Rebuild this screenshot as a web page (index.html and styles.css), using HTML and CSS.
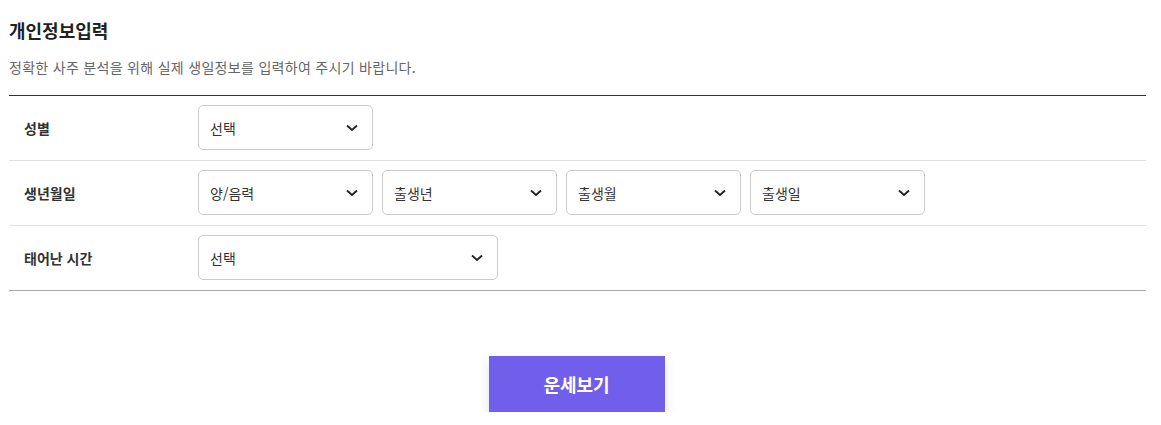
FILE: index.html
```html
<!DOCTYPE html>
<html lang="ko">
<head>
<meta charset="utf-8">
<title>개인정보입력</title>
<link rel="stylesheet" href="styles.css">
</head>
<body>
<div class="page">
  <h2 class="title">개인정보입력</h2>
  <p class="desc">정확한 사주 분석을 위해 실제 생일정보를 입력하여 주시기 바랍니다.</p>
  <div class="form">
    <div class="row">
      <div class="label">성별</div>
      <div class="fields">
        <div class="select"><span>선택</span><svg class="chev" width="12" height="8" viewBox="0 0 12 8"><path d="M1 1.5 L6 6 L11 1.5" fill="none" stroke="#222" stroke-width="1.8"/></svg></div>
      </div>
    </div>
    <div class="row">
      <div class="label">생년월일</div>
      <div class="fields">
        <div class="select"><span>양/음력</span><svg class="chev" width="12" height="8" viewBox="0 0 12 8"><path d="M1 1.5 L6 6 L11 1.5" fill="none" stroke="#222" stroke-width="1.8"/></svg></div>
        <div class="select"><span>출생년</span><svg class="chev" width="12" height="8" viewBox="0 0 12 8"><path d="M1 1.5 L6 6 L11 1.5" fill="none" stroke="#222" stroke-width="1.8"/></svg></div>
        <div class="select"><span>출생월</span><svg class="chev" width="12" height="8" viewBox="0 0 12 8"><path d="M1 1.5 L6 6 L11 1.5" fill="none" stroke="#222" stroke-width="1.8"/></svg></div>
        <div class="select"><span>출생일</span><svg class="chev" width="12" height="8" viewBox="0 0 12 8"><path d="M1 1.5 L6 6 L11 1.5" fill="none" stroke="#222" stroke-width="1.8"/></svg></div>
      </div>
    </div>
    <div class="row">
      <div class="label">태어난 시간</div>
      <div class="fields">
        <div class="select wide"><span>선택</span><svg class="chev" width="12" height="8" viewBox="0 0 12 8"><path d="M1 1.5 L6 6 L11 1.5" fill="none" stroke="#222" stroke-width="1.8"/></svg></div>
      </div>
    </div>
  </div>
  <div class="actions">
    <button class="btn">운세보기</button>
  </div>
</div>
</body>
</html>
```
FILE: styles.css
```css
* { box-sizing: border-box; }
html, body { margin: 0; padding: 0; background: #fff; }
body {
  font-family: "Noto Sans CJK KR", "Noto Sans", sans-serif;
  color: #333;
}
.page {
  width: 1137px;
  margin-left: 9px;
  padding-top: 17px;
}
.title {
  margin: 0;
  font-size: 18px;
  line-height: 26px;
  font-weight: 700;
  color: #222;
}
.desc {
  margin: 14px 0 0;
  font-size: 14px;
  line-height: 20px;
  letter-spacing: 0.3px;
  color: #666;
}
.form {
  margin-top: 18px;
  border-top: 1px solid #333;
  border-bottom: 1px solid #aaa;
}
.row {
  display: flex;
  align-items: center;
  padding: 9px 0 10px;
  border-bottom: 1px solid #e2e2e2;
}
.row:last-child { border-bottom: none; }
.label {
  width: 189px;
  padding-left: 15px;
  font-size: 14px;
  font-weight: 700;
  color: #333;
}
.fields {
  display: flex;
  gap: 10px;
}
.select {
  width: 175px;
  height: 45px;
  border: 1px solid #ccc;
  border-radius: 5px;
  display: flex;
  align-items: center;
  justify-content: space-between;
  padding: 0 14px 0 11px;
  font-size: 14px;
  color: #333;
}
.fields .select + .select { margin-left: -1px; }
.select.wide { width: 300px; }
.chev { display: block; }
.actions {
  display: flex;
  justify-content: center;
  margin-top: 65px;
  padding-right: 2px;
}
.btn {
  width: 176px;
  height: 56px;
  border: none;
  background: #715eeb;
  color: #fff;
  font-family: inherit;
  font-size: 18px;
  font-weight: 700;
  box-shadow: 0 4px 10px rgba(113, 94, 235, 0.18);
  cursor: pointer;
}
```
